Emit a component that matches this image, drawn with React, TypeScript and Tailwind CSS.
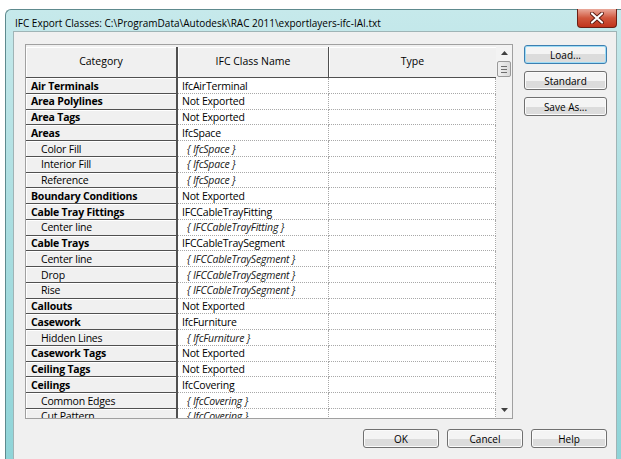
import React from 'react';

type Row = { category: string; ifc: string; sub?: boolean };

const rows: Row[] = [
  { category: 'Air Terminals', ifc: 'IfcAirTerminal' },
  { category: 'Area Polylines', ifc: 'Not Exported' },
  { category: 'Area Tags', ifc: 'Not Exported' },
  { category: 'Areas', ifc: 'IfcSpace' },
  { category: 'Color Fill', ifc: '{ IfcSpace }', sub: true },
  { category: 'Interior Fill', ifc: '{ IfcSpace }', sub: true },
  { category: 'Reference', ifc: '{ IfcSpace }', sub: true },
  { category: 'Boundary Conditions', ifc: 'Not Exported' },
  { category: 'Cable Tray Fittings', ifc: 'IFCCableTrayFitting' },
  { category: 'Center line', ifc: '{ IFCCableTrayFitting }', sub: true },
  { category: 'Cable Trays', ifc: 'IFCCableTraySegment' },
  { category: 'Center line', ifc: '{ IFCCableTraySegment }', sub: true },
  { category: 'Drop', ifc: '{ IFCCableTraySegment }', sub: true },
  { category: 'Rise', ifc: '{ IFCCableTraySegment }', sub: true },
  { category: 'Callouts', ifc: 'Not Exported' },
  { category: 'Casework', ifc: 'IfcFurniture' },
  { category: 'Hidden Lines', ifc: '{ IfcFurniture }', sub: true },
  { category: 'Casework Tags', ifc: 'Not Exported' },
  { category: 'Ceiling Tags', ifc: 'Not Exported' },
  { category: 'Ceilings', ifc: 'IfcCovering' },
  { category: 'Common Edges', ifc: '{ IfcCovering }', sub: true },
  { category: 'Cut Pattern', ifc: '{ IfcCovering }', sub: true },
];

const font = { fontFamily: '"Segoe UI", "Open Sans", "Noto Sans", sans-serif' };

function WinButton({ label, focused }: { label: string; focused?: boolean }) {
  return (
    <button
      className={`flex h-[19px] w-full items-center justify-center rounded-[3px] border bg-gradient-to-b from-[#f4f4f4] from-50% to-[#dcdcdc] to-50% pt-px text-[10px] leading-none text-black ${
        focused ? 'border-[#3c7fb1] shadow-[inset_0_0_0_1px_#9fdcf5]' : 'border-[#707070] shadow-[inset_0_0_0_1px_#fbfbfb]'
      }`}
    >
      {label}
    </button>
  );
}

function ScrollBar() {
  return (
    <div className="flex w-[16px] flex-col bg-[#f3f3f3]">
      <div className="flex h-[16px] items-center justify-center">
        <svg width="7" height="4" viewBox="0 0 7 4">
          <path d="M0 4 L3.5 0 L7 4 Z" fill="#404040" />
        </svg>
      </div>
      <div className="mx-[1px] flex h-[16px] flex-col items-center justify-center gap-[2px] rounded-[2px] border border-[#9a9a9a] bg-gradient-to-r from-[#f1f1f1] to-[#dadada]">
        <div className="h-px w-[6px] bg-[#6e6e6e]" />
        <div className="h-px w-[6px] bg-[#6e6e6e]" />
        <div className="h-px w-[6px] bg-[#6e6e6e]" />
      </div>
      <div className="flex-1" />
      <div className="flex h-[16px] items-center justify-center">
        <svg width="7" height="4" viewBox="0 0 7 4">
          <path d="M0 0 L3.5 4 L7 0 Z" fill="#404040" />
        </svg>
      </div>
    </div>
  );
}

function ClassTable() {
  return (
    <div className="flex h-[375px] w-[488px] border border-[#a0a0a0] bg-white">
      <div className="flex w-[470px] flex-col overflow-hidden">
        {/* header */}
        <div className="grid h-[33px] shrink-0 grid-cols-[152px_151px_167px] border-b border-[#505050] bg-[#f0f0f0] pt-[2px] text-[10.5px] text-black">
          <div className="flex items-center justify-center border-r-2 border-[#505050] shadow-[inset_1px_1px_0_#ffffff]">Category</div>
          <div className="flex items-center justify-center border-r border-[#505050] shadow-[inset_1px_1px_0_#ffffff]">IFC Class Name</div>
          <div className="flex items-center justify-center shadow-[inset_1px_1px_0_#ffffff]">Type</div>
        </div>
        {/* rows */}
        {rows.map((r, i) => (
          <div key={i} className="grid h-[15.75px] shrink-0 grid-cols-[152px_151px_167px] text-[10.5px] leading-none tracking-[-0.2px] text-black">
            <div
              className={`flex items-center border-b border-r-2 border-[#505050] bg-[#f0f0f0] pt-px shadow-[inset_1px_1px_0_#ffffff] ${
                r.sub ? 'pl-[15px]' : 'pl-[5px] font-bold'
              }`}
            >
              {r.category}
            </div>
            <div
              className={`flex items-center border-b border-r border-dotted border-[#a8a8a8] pt-px ${
                r.sub ? 'pl-[9px] italic text-[#202020]' : 'pl-[4px]'
              }`}
            >
              {r.ifc}
            </div>
            <div className="border-b border-r border-dotted border-[#a8a8a8]" />
          </div>
        ))}
      </div>
      <ScrollBar />
    </div>
  );
}

export default function App() {
  return (
    <div className="h-[459px] w-[621px] overflow-hidden bg-white pl-[5px] pt-[9px]" style={font}>
      <div className="flex h-[450px] w-[616px] flex-col rounded-tl-[6px] border-l border-t border-[#5e8a8e] bg-gradient-to-b from-[#c6e9eb] via-[#a9dde0] to-[#8fd4d8] pr-[4px]">
        {/* title bar */}
        <div className="relative flex h-[21px] shrink-0 items-center pl-[9px] pt-[5px] text-[10px] text-black">
          <span>IFC Export Classes: C:\ProgramData\Autodesk\RAC 2011\exportlayers-ifc-IAI.txt</span>
          <div className="absolute right-[0px] top-[-1px] flex h-[19px] w-[40px] items-center justify-center rounded-b-[4px] border border-t-0 border-[#6b1f14] bg-gradient-to-b from-[#e9a99b] via-[#d0563c] to-[#c0331b]">
            <svg width="14" height="12" viewBox="0 0 14 12">
              <path d="M2 1.5 L12 10.5 M12 1.5 L2 10.5" stroke="#5b1a10" strokeWidth="4" strokeLinecap="round" />
              <path d="M2 1.5 L12 10.5 M12 1.5 L2 10.5" stroke="#ffffff" strokeWidth="2.2" strokeLinecap="round" />
            </svg>
          </div>
        </div>
        {/* client */}
        <div className="ml-[7px] flex flex-1 flex-col border border-b-0 border-[#9fb4b6] bg-[#f0f0f0] pl-[11px] pt-[12px]">
          <div className="flex gap-[11px]">
            <ClassTable />
            <div className="mt-[1px] flex w-[83px] flex-col gap-[7px]">
              <WinButton label="Load..." focused />
              <WinButton label="Standard" />
              <WinButton label="Save As..." />
            </div>
          </div>
          <div className="mt-[10px] flex justify-end gap-[8px] pr-[9px]">
            <div className="w-[76px]">
              <WinButton label="OK" />
            </div>
            <div className="w-[76px]">
              <WinButton label="Cancel" />
            </div>
            <div className="w-[76px]">
              <WinButton label="Help" />
            </div>
          </div>
        </div>
      </div>
    </div>
  );
}
